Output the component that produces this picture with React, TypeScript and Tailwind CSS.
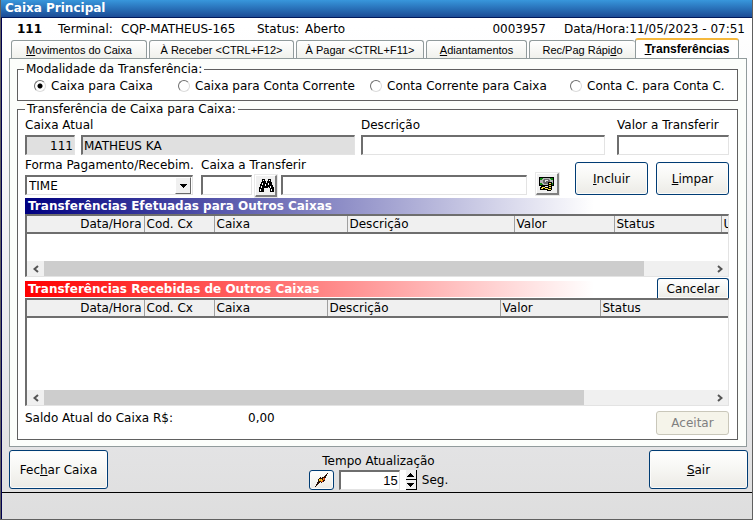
import type { ReactNode } from 'react';

const sunken =
  'h-5 min-w-0 border border-t-2 border-l-2 border-[#e3e3e3] border-t-[#6e6e6e] border-l-[#6e6e6e] px-px outline-none';
const pushButton =
  'rounded-[3px] border border-[#003c74] bg-linear-to-b from-white via-[#f6f6f3] to-[#ecebe6] shadow-[inset_0_0_0_1px_#fbfbfa]';
const raised =
  'flex items-center justify-center border border-r-2 border-b-2 border-white border-r-[#808080] border-b-[#808080] bg-[#f0f0f0] shadow-[0_0_0_1px_#e8e8e8]';

function Binoculars() {
  return (
    <svg viewBox="0 0 16 14" className="h-[14px] w-4" shapeRendering="crispEdges" aria-hidden="true">
      <path d="M4 0h3v2h1v2h1V2h1V0h3v3h1v3h1v2h1v5h-4V9h-1V8h-1v1H6v4H1V8h1V5h1V3h1z" fill="#000" />
      <path
        d="M5 1h1v1H5zM11 1h1v1h-1zM4 4h1v2H4zM3 7h1v2H3zM2 10h1v2H2zM7 5h1v2H7zM10 4h1v2h-1zM12 7h1v2h-1zM13 10h1v2h-1z"
        fill="#fff"
      />
    </svg>
  );
}

function Money() {
  return (
    <svg viewBox="0 0 16 14" className="h-[14px] w-4" shapeRendering="crispEdges" aria-hidden="true">
      <path d="M0 0h15v9H0z" fill="#000" />
      <path d="M1 1h13v7H1z" fill="#b4b4b4" />
      <path d="M1 1h3v1H3v1H1zM11 1h3v2h-2V2h-1zM1 6h2v1h1v1H1zM12 6h2v2h-3V7h1z" fill="#108a10" />
      <path d="M5 2h5v1h1v3h-1v1H5V6H4V3h1z" fill="#6c6c6c" />
      <path d="M6 3h3v1H7v1H6z" fill="#e6e6e6" />
      <path d="M9 5h4v8h-1v1H8v-1H1v-3h1V9h4v1h3z" fill="#000" />
      <path d="M10 6h2v1h-2zM10 8h2v1h-2zM10 10h2v1h-2zM9 12h3v1H9zM3 10h3v1H3zM2 11h2v1H2zM6 11h3v1H6z" fill="#ffe94a" />
    </svg>
  );
}

function Bolt() {
  return (
    <svg viewBox="0 0 13 14" className="h-[14px] w-[13px]" shapeRendering="crispEdges" aria-hidden="true">
      <path
        d="M12 0h1v1h-1v2h-1v2h-1v3H9v1H7v1H6V9H5v1H4v1H3v1H2v1H1v1H0v-1h1v-2h1V9h1V6h1V5h1V4h1v1h1V4h2V3h1V2h1V1h1z"
        fill="#2a1208"
      />
      <path d="M4 6h2v1h2V5h1v2H8v1H7v1H6V8H4z" fill="#f08a1c" />
      <path d="M4 6h1v2H4zM6 6h1v2H6z" fill="#ffd21c" />
      <path d="M9 5h1v2H9zM7 8h1v1H7z" fill="#c8281c" />
    </svg>
  );
}

function Chevron({ right }: { right?: boolean }) {
  return (
    <svg viewBox="0 0 6 8" className="h-2 w-[6px]" aria-hidden="true">
      <path d={right ? 'M1 1l3.5 3L1 7' : 'M5 1L1.500 4 5 7'} fill="none" stroke="#555" strokeWidth="2" />
    </svg>
  );
}

function Tab({ className, children }: { className: string; children: ReactNode }) {
  return (
    <button
      type="button"
      role="tab"
      aria-selected={false}
      className={`h-[18px] rounded-t-[3px] border border-b-0 border-[#919b9c] bg-linear-to-b from-white to-[#f0f1ec] whitespace-nowrap ${className}`}
    >
      {children}
    </button>
  );
}

function Mode({ label, className, checked }: { label: string; className: string; checked?: boolean }) {
  return (
    <label className={`flex shrink-0 items-center gap-[5px] whitespace-nowrap ${className}`}>
      <input
        type="radio"
        name="modalidade"
        defaultChecked={checked}
        className="size-3 shrink-0 appearance-none rounded-full border border-[#dcdcdc] border-t-[#6e6e6e] border-l-[#6e6e6e] bg-white checked:bg-[radial-gradient(circle,#000_2px,#fff_3px)]"
      />
      {label}
    </label>
  );
}

interface Column {
  title: string;
  width: string;
}

const sentColumns: Column[] = [
  { title: 'Data/Hora', width: 'w-[117px]' },
  { title: 'Cod. Cx', width: 'w-[70px]' },
  { title: 'Caixa', width: 'w-[133px]' },
  { title: 'Descrição', width: 'w-[167px]' },
  { title: 'Valor', width: 'w-[100px]' },
  { title: 'Status', width: 'w-[107px]' },
  { title: 'U', width: '' },
];

const receivedColumns: Column[] = [
  { title: 'Data/Hora', width: 'w-[117px]' },
  { title: 'Cod. Cx', width: 'w-[70px]' },
  { title: 'Caixa', width: 'w-[113px]' },
  { title: 'Descrição', width: 'w-[173px]' },
  { title: 'Valor', width: 'w-[100px]' },
  { title: 'Status', width: '' },
];

function DataGrid({ columns, body, thumb }: { columns: Column[]; body: string; thumb: string }) {
  return (
    <div className="border border-t-2 border-l-2 border-[#e3e3e3] border-t-[#6e6e6e] border-l-[#6e6e6e] bg-white">
      <table className="w-full table-fixed border-collapse">
        <thead>
          <tr className="h-[17px] border-b-2 border-[#6e6e6e] bg-[#f0f0f0]">
            {columns.map((c, i) => (
              <th
                key={c.title}
                className={`overflow-hidden p-0 font-normal whitespace-nowrap ${c.width} ${
                  i === 0 ? 'pr-[2px] text-right' : 'pl-[2px] text-left'
                } ${i < columns.length - 1 ? 'border-r border-[#a0a0a0]' : ''}`}
              >
                {c.title}
              </th>
            ))}
          </tr>
        </thead>
        <tbody>
          <tr className={body}>
            <td colSpan={columns.length} />
          </tr>
        </tbody>
      </table>
      <div className="flex h-[15px] bg-[#f0f0f0]">
        <button type="button" aria-label="Rolar para a esquerda" className="flex w-[17px] items-center justify-center">
          <Chevron />
        </button>
        <div className="flex-1">
          <div className={`h-full bg-[#cdcdcd] ${thumb}`} />
        </div>
        <button type="button" aria-label="Rolar para a direita" className="flex w-[17px] items-center justify-center">
          <Chevron right />
        </button>
      </div>
    </div>
  );
}

export default function App() {
  return (
    <div className="flex flex-col border-r border-b border-l border-[#606060] bg-linear-to-b from-white from-5% via-[#e9e9ec] via-70% to-[#dedede] font-['DejaVu_Sans',Verdana,sans-serif] text-[12px] leading-[14px] text-black">
      <header className="h-[18px] border-b border-[#001a5c] bg-linear-to-b from-[#3897dc] to-[#1c4c96] px-1">
        <h1 className="text-[12px] leading-4 font-bold text-white">Caixa Principal</h1>
      </header>

      <div className="border-l border-[#000050]">
        <div className="flex h-5 items-end pr-[7px] pb-[2px] pl-[15px] whitespace-nowrap">
          <b className="w-[41px]">111</b>
          <span className="w-[63px]">Terminal:</span>
          <span className="w-[136px]">CQP-MATHEUS-165</span>
          <span className="w-12">Status:</span>
          <span>Aberto</span>
          <span className="ml-auto">0003957</span>
          <span className="ml-[18px]">Data/Hora:11/05/2023 - 07:51</span>
        </div>

        <div className="pr-[5px] pl-[7px]">
          <div
            role="tablist"
            className="flex h-5 items-end gap-[2px] px-[2px] font-['Liberation_Sans',Arial,sans-serif] text-[11px]"
          >
            <Tab className="w-[136px]">
              <u>M</u>ovimentos do Caixa
            </Tab>
            <Tab className="w-[145px]">À Receber &lt;CTRL+F12&gt;</Tab>
            <Tab className="w-[128px]">À Pagar &lt;CTRL+F11&gt;</Tab>
            <Tab className="w-[101px]">
              <u>A</u>diantamentos
            </Tab>
            <div className="flex items-end">
              <Tab className="w-[106px] border-r-0">
                Rec/Pag Rápi<u>d</u>o
              </Tab>
              <button
                type="button"
                role="tab"
                aria-selected
                className="h-5 w-[104px] rounded-t-[3px] border border-t-2 border-b-0 border-[#919b9c] border-t-[#f5b83c] bg-white text-[12px] font-bold"
              >
                <u>T</u>ransferências
              </button>
            </div>
          </div>

          <main className="border border-[#919b9c] bg-[#fcfefb] pt-[3px] pr-2 pb-[6px] pl-[7px]">
            <fieldset className="min-w-0 border border-[#606060] bg-[linear-gradient(#fff,#fff)] px-4">
              <legend className="-ml-[10px] px-[2px]">Modalidade da Transferência:</legend>
              <div className="flex h-6 items-center pb-1">
                <Mode label="Caixa para Caixa" className="w-36" checked />
                <Mode label="Caixa para Conta Corrente" className="w-48" />
                <Mode label="Conta Corrente para Caixa" className="w-[200px]" />
                <Mode label="Conta C. para Conta C." className="" />
              </div>
            </fieldset>

            <fieldset className="mt-px min-w-0 border border-[#606060] bg-[linear-gradient(#fff,#fff)] pr-2 pb-1 pl-[7px]">
              <legend className="px-[2px]">Transferência de Caixa para Caixa:</legend>

              <div className="flex items-end pt-[2px]">
                <div className="flex flex-col gap-[3px]">
                  <label htmlFor="caixaAtual">Caixa Atual</label>
                  <div className="flex gap-[6px]">
                    <input id="caixaAtual" readOnly defaultValue="111" className={`w-[50px] bg-[#e0e0e0] text-right ${sunken}`} />
                    <input aria-label="Nome do caixa" readOnly defaultValue="MATHEUS KA" className={`w-[274px] bg-[#e0e0e0] ${sunken}`} />
                  </div>
                </div>
                <div className="ml-[6px] flex flex-1 flex-col gap-[3px]">
                  <label htmlFor="descricao">Descrição</label>
                  <input id="descricao" className={`w-full bg-white ${sunken}`} />
                </div>
                <div className="ml-3 flex flex-col gap-[3px]">
                  <label htmlFor="valor">Valor a Transferir</label>
                  <input id="valor" className={`w-28 bg-white ${sunken}`} />
                </div>
              </div>

              <div className="mt-[3px] flex items-end">
                <div className="flex w-[168px] flex-col gap-[3px] whitespace-nowrap">
                  <label htmlFor="forma">Forma Pagamento/Recebim.</label>
                  <div className={`grid grid-cols-[1fr_16px] bg-white ${sunken}`}>
                    <select id="forma" className="col-span-2 col-start-1 row-start-1 w-full appearance-none pl-px outline-none">
                      <option>TIME</option>
                    </select>
                    <span className="pointer-events-none col-start-2 row-start-1 flex items-center justify-center border border-white border-r-[#696969] border-b-[#696969] bg-[#f0f0f0]">
                      <svg viewBox="0 0 7 4" className="h-1 w-[7px]" shapeRendering="crispEdges" aria-hidden="true">
                        <path d="M0 0h7L3.500 4z" />
                      </svg>
                    </span>
                  </div>
                </div>
                <div className="ml-2 flex w-[51px] flex-col gap-[3px] whitespace-nowrap">
                  <label htmlFor="destino">Caixa a Transferir</label>
                  <input id="destino" className={`w-full bg-white ${sunken}`} />
                </div>
                <button type="button" aria-label="Localizar caixa" className={`-mb-[2px] ml-[3px] h-[22px] w-[22px] shrink-0 ${raised}`}>
                  <Binoculars />
                </button>
                <input aria-label="Nome do caixa de destino" className={`ml-1 flex-1 bg-white ${sunken}`} />
                <button type="button" aria-label="Valores" className={`ml-[9px] h-[22px] w-[23px] shrink-0 ${raised}`}>
                  <Money />
                </button>
                <button type="button" className={`ml-4 h-[33px] w-[73px] ${pushButton}`}>
                  <u>I</u>ncluir
                </button>
                <button type="button" className={`ml-2 h-[33px] w-[73px] ${pushButton}`}>
                  <u>L</u>impar
                </button>
              </div>

              <h2 className="mt-[3px] mr-[135px] h-4 bg-linear-to-r/srgb from-[#000080] to-white pl-[3px] leading-4 font-bold text-white">
                Transferências Efetuadas para Outros Caixas
              </h2>
              <DataGrid columns={sentColumns} body="h-7" thumb="w-[90%]" />

              <div className="mt-px flex h-5 items-end pb-px">
                <h2 className="h-4 flex-1 bg-linear-to-r/srgb from-[#ff0000] to-white pl-[3px] leading-4 font-bold text-white">
                  Transferências Recebidas de Outros Caixas
                </h2>
                <button type="button" className={`-mb-px ml-[63px] h-5 w-[72px] rounded-b-none border-b-0 ${pushButton}`}>
                  Cancelar
                </button>
              </div>
              <DataGrid columns={receivedColumns} body="h-[73px]" thumb="w-[81%]" />

              <div className="mt-[5px] flex items-start">
                <span className="w-[223px]">Saldo Atual do Caixa R$:</span>
                <output>0,00</output>
                <button
                  type="button"
                  disabled
                  className="ml-auto h-6 w-[73px] rounded-[3px] border border-[#c9c7ba] bg-[#f5f4ea] text-[#808080]"
                >
                  Aceitar
                </button>
              </div>
            </fieldset>
          </main>
        </div>

        <footer>
          <div className="flex items-start justify-between border-b border-black pt-[3px] pr-1 pb-[2px] pl-[7px]">
            <button type="button" className={`h-[39px] w-[99px] ${pushButton}`}>
              Fec<u>h</u>ar Caixa
            </button>
            <div className="flex flex-col items-center gap-[2px] pt-1">
              <label htmlFor="tempo">Tempo Atualização</label>
              <div className="flex items-center">
                <button type="button" aria-label="Atualizar agora" className={`flex h-5 w-[25px] items-center justify-center ${pushButton}`}>
                  <Bolt />
                </button>
                <input
                  id="tempo"
                  defaultValue="15"
                  className={`ml-[5px] w-[61px] bg-white text-right font-['Liberation_Sans',Arial,sans-serif] text-[13px] ${sunken}`}
                />
                <div className="flex flex-col bg-white pl-[6px]">
                  {['M3.500 0L7 4H0z', 'M0 0h7L3.500 4z'].map((d, i) => (
                    <button
                      key={d}
                      type="button"
                      aria-label={i === 0 ? 'Aumentar' : 'Diminuir'}
                      className="flex h-[10px] w-[11px] items-center justify-center border-r border-b border-black bg-[#f0f0f0]"
                    >
                      <svg viewBox="0 0 7 4" className="h-1 w-[7px]" shapeRendering="crispEdges" aria-hidden="true">
                        <path d={d} />
                      </svg>
                    </button>
                  ))}
                </div>
                <span className="ml-[5px]">Seg.</span>
              </div>
            </div>
            <button type="button" className={`h-[39px] w-[99px] ${pushButton}`}>
              <u>S</u>air
            </button>
          </div>
          <div className="h-[26px]" />
        </footer>
      </div>
    </div>
  );
}
